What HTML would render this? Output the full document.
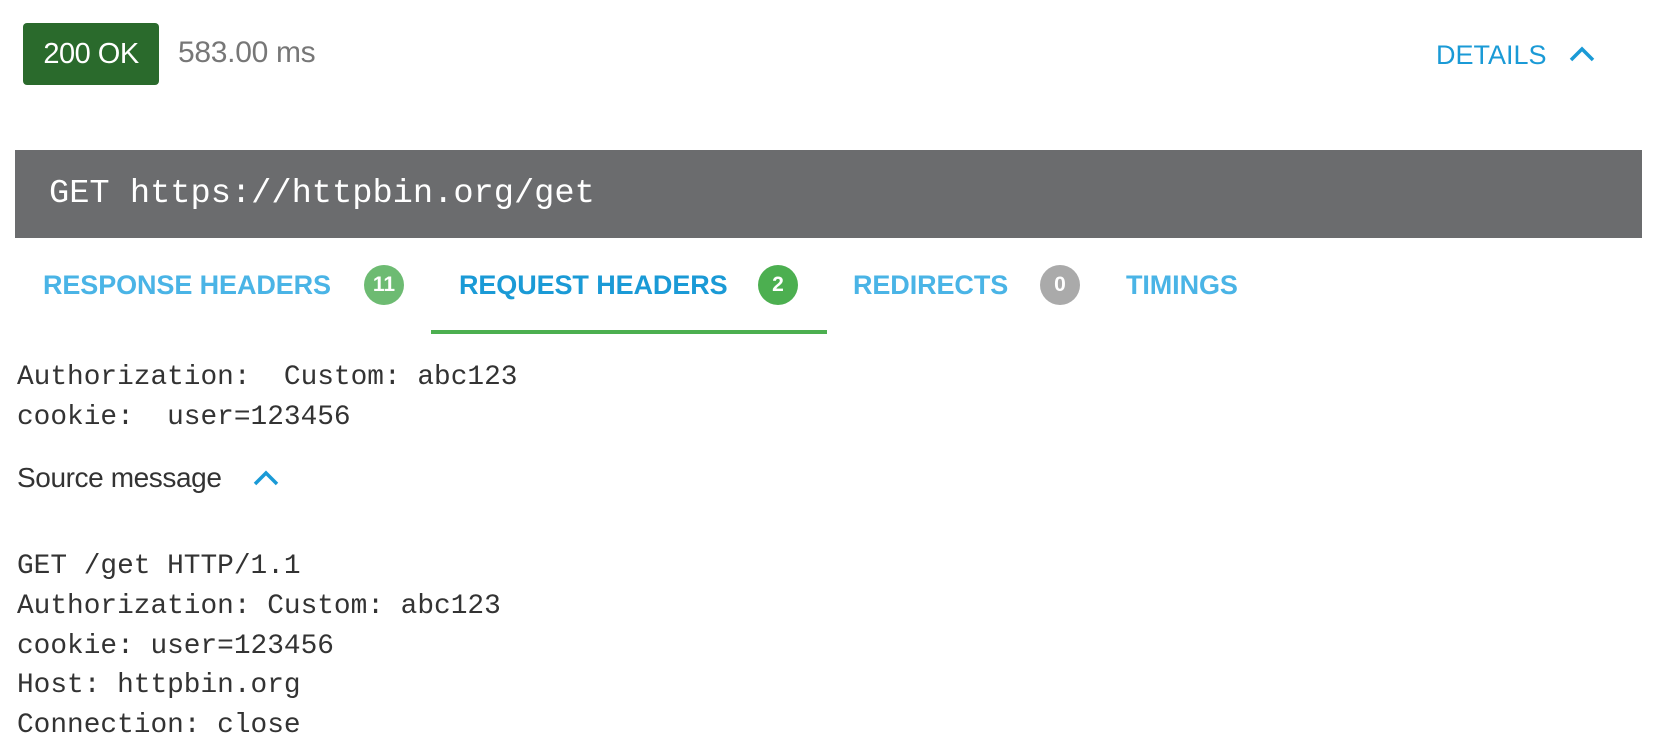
<!DOCTYPE html>
<html><head><style>
body{margin:0;width:1658px;height:752px;background:#fff;position:relative;overflow:hidden;font-family:"Liberation Sans",sans-serif}
.a{position:absolute;white-space:pre}
.mono{font-family:"Liberation Mono",monospace;color:#333;font-size:27.8px}
.tab{font-weight:bold;font-size:27px;letter-spacing:-0.1px;top:268px;line-height:34px}
.b{position:absolute;width:40px;height:40px;border-radius:50%;color:#fff;font-weight:bold;font-size:21px;text-align:center;line-height:40px;top:265px}
</style></head><body>
<div class="a" style="left:23px;top:23px;width:136px;height:62px;background:#2a6a2c;border-radius:4px;color:#fff;font-size:29px;line-height:62px;text-align:center;letter-spacing:-0.5px">200 OK</div>
<div class="a" style="left:178px;top:36px;color:#777;font-size:30px;line-height:34px;letter-spacing:-0.3px">583.00 ms</div>
<div class="a" style="left:1436px;top:38px;color:#1a9ad6;font-size:27px;line-height:34px;letter-spacing:0px">DETAILS</div>
<svg class="a" style="left:1568px;top:43px" width="28" height="22"><path d="M3 17 L14 6 L25 17" stroke="#1a9ad6" stroke-width="3.5" fill="none"/></svg>
<div class="a" style="left:15px;top:150px;width:1627px;height:88px;background:#6b6c6e"></div>
<div class="a" style="left:49px;top:174px;color:#fff;font-family:'Liberation Mono',monospace;font-size:33.7px;line-height:40px">GET https://httpbin.org/get</div>
<div class="a tab" style="left:43px;color:#4ab4e6">RESPONSE HEADERS</div>
<div class="b" style="left:364px;background:#6dbb72">11</div>
<div class="a tab" style="left:459px;color:#1a9ad6">REQUEST HEADERS</div>
<div class="b" style="left:758px;background:#4caf50">2</div>
<div class="a tab" style="left:853px;color:#4ab4e6">REDIRECTS</div>
<div class="b" style="left:1040px;background:#aaa">0</div>
<div class="a tab" style="left:1126px;color:#4ab4e6">TIMINGS</div>
<div class="a" style="left:431px;top:330px;width:396px;height:4px;background:#4caf50"></div>
<div class="a mono" style="left:17px;top:358px;line-height:40px">Authorization:  Custom: abc123
cookie:  user=123456</div>
<div class="a" style="left:17px;top:462px;font-size:28px;line-height:32px;color:#333;letter-spacing:-0.4px">Source message</div>
<svg class="a" style="left:252px;top:468px" width="28" height="20"><path d="M3 16 L14 5 L25 16" stroke="#1a9ad6" stroke-width="3.5" fill="none"/></svg>
<div class="a mono" style="left:17px;top:547px;line-height:39.8px">GET /get HTTP/1.1
Authorization: Custom: abc123
cookie: user=123456
Host: httpbin.org
Connection: close</div>
</body></html>
